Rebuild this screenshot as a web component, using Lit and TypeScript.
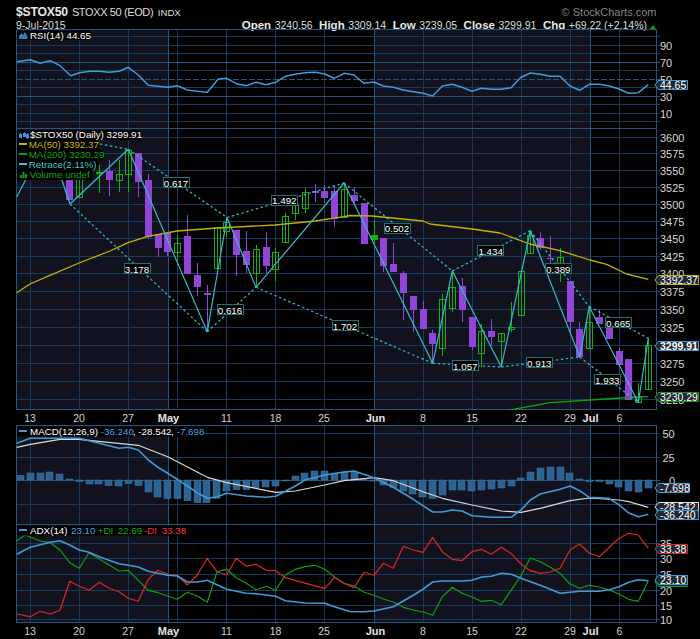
import { LitElement, html, svg, css } from "lit";
import { customElement } from "lit/decorators.js";

type P = [number, number];
const GRID = "#173a5c", BORDER = "#24557f", BAND = "#12121f";
const BLUE = "#3f9bd8", GREEN = "#0f9f0f", RED = "#e02525", YEL = "#c4b000", TEAL = "#33bcc4", PURP = "#9145d8";

const V: [number, boolean][] = [[30.5, false], [79.5, false], [128.5, false], [168.5, true], [177.5, false], [226.5, false], [275.5, false], [324.5, false], [374.5, true], [423.5, false], [472.5, false], [521.5, false], [570.5, false], [590.5, true], [619.5, false]];
const TICKS: [string, number, boolean][] = [["13", 30, false], ["20", 79, false], ["27", 128, false], ["May", 168.5, true], ["11", 226.5, false], ["18", 275.5, false], ["25", 324, false], ["Jun", 375.5, true], ["8", 423, false], ["15", 472, false], ["22", 521, false], ["29", 570, false], ["Jul", 590.5, true], ["6", 619.5, false]];

const RSI: P[] = [[16.7, 61.7], [30.3, 59.7], [40, 63.3], [50, 60.7], [60, 65.7], [70.7, 75.7], [79.3, 72.7], [90, 71.3], [99.3, 71.3], [109, 72.3], [119, 71.3], [128.3, 67.3], [138.3, 75], [148.3, 85.3], [158, 86.3], [167.7, 87.3], [177.3, 85.7], [187.3, 90], [197.3, 91.3], [207.3, 92.3], [218.3, 79], [226.7, 78.3], [236.3, 83.7], [246.3, 85.7], [256, 82.3], [266, 84.7], [275.7, 82.3], [285.3, 76.3], [295.3, 74.3], [305, 72.7], [315, 72.3], [324.7, 74], [334.3, 78.3], [344, 73.3], [354, 75], [364, 83.3], [374, 82], [383.3, 86], [393.3, 87.3], [403.3, 90], [413.3, 91.7], [423, 93.3], [432.7, 96], [442.3, 86], [452.3, 84.3], [462, 87.3], [472, 91.3], [481.3, 88.3], [491.3, 89.3], [501.3, 89.3], [511, 87.7], [521, 77.3], [530.3, 73], [540.3, 74.3], [550.3, 76.3], [560, 76.3], [570, 86], [579.7, 90.3], [589.3, 84.3], [599.3, 84.3], [609.3, 86], [619, 89], [628.7, 93.3], [638.3, 92.7], [648.3, 84.7]];

// x, wickTop, bodyTop, bodyBottom, wickBottom, kind (p purple, g hollow green, f filled green)
const CANDLES: [number, number, number, number, number, string][] = [
  [69.7, 165, 170, 200, 200, "p"], [79.3, 165, 170, 196.7, 197, "g"], [99.3, 165, 171.5, 173.5, 193, "f"], [109, 160, 171, 180, 195.7, "p"], [119, 160, 174, 179.5, 191.7, "g"], [128.4, 150, 150, 174.3, 191.7, "g"], [138.4, 153, 153, 181.7, 196.7, "p"], [148.4, 174, 180, 236.7, 239, "p"], [158, 234, 234, 247.7, 256.7, "p"], [167.7, 233, 233, 251.7, 256, "p"], [177.3, 235, 243, 251.7, 260, "g"], [187.3, 215, 236, 274, 274, "p"], [197.3, 262.7, 275, 286.7, 295.7, "p"], [207.3, 285, 293, 295, 331.7, "p"], [217, 227.3, 227.3, 268.7, 268.7, "g"], [226.7, 216.7, 221.7, 230.7, 236.7, "g"], [236.3, 230, 230, 255, 275.7, "p"], [246.3, 231, 251, 265, 272.7, "p"], [256, 245, 249.3, 273.3, 287, "g"], [266, 232, 247, 265.7, 273, "p"], [275.7, 248, 252, 268.7, 280.7, "g"], [285.3, 213, 216, 241.7, 241.7, "g"], [295.3, 199, 205, 213.3, 220, "g"], [305, 188, 191.7, 207.3, 213, "g"], [315, 184, 191, 192.7, 201.7, "p"], [324.7, 185, 191, 198.3, 203, "p"], [334.3, 186, 191, 219.3, 226.7, "p"], [344, 183, 189, 216.7, 216.7, "g"], [354, 187, 195, 201, 205, "p"], [364, 202.7, 202.7, 244, 244, "p"], [374, 220, 235, 240, 243, "f"], [383.3, 238.3, 238.3, 266, 272.3, "p"], [393.3, 243.3, 264, 272, 272, "p"], [403.3, 271, 273.3, 292.7, 320, "p"], [413.3, 296, 296, 310, 331.7, "p"], [423, 301, 309, 329.3, 329.3, "p"], [432.7, 330, 333.3, 344, 363.3, "p"], [442.3, 294, 299.3, 348.3, 355.7, "g"], [452.3, 271.7, 286.7, 307.7, 311.7, "g"], [462, 278, 286, 310, 321.7, "p"], [472, 317.3, 317.3, 346.7, 350, "p"], [481.3, 324, 330.7, 352.7, 366.7, "g"], [491.3, 319, 331, 336.7, 345, "p"], [501.3, 333.3, 333.3, 341.7, 367, "g"], [511, 302.3, 327.3, 329.3, 331.5, "g"], [521, 271.3, 271.3, 315.3, 315.3, "g"], [530.3, 230.7, 235, 253.3, 253.3, "g"], [540.3, 231.7, 238.3, 248.3, 250, "p"], [550.3, 236, 257.7, 259, 263, "p"], [560, 248.3, 257.3, 263.3, 281.7, "g"], [570, 281, 281, 321.7, 331.7, "p"], [579.7, 321.7, 329, 356.7, 357, "p"], [589.3, 306.7, 322.3, 348.3, 348.3, "g"], [599.3, 310, 317.3, 324, 324, "p"], [609.3, 318, 325, 338.7, 338.7, "p"], [619, 347.7, 351, 365, 365, "p"], [628.7, 359, 359, 400, 400, "p"], [638.3, 383.3, 396.7, 401.7, 402, "g"], [648.3, 338.3, 345, 389, 389, "g"],
];

const MA50: P[] = [[16.7, 292.7], [30, 284], [50, 275.3], [79, 263], [110, 251], [128, 242.7], [148, 236.3], [177, 231], [217, 228], [275, 225], [315, 221], [344, 216.7], [350, 215.5], [372, 216], [423, 221], [430, 224], [472, 229], [500, 233], [530, 244], [560, 250.7], [590, 260], [606.7, 264.3], [626.7, 274], [648.3, 279.3]];
const MA200: P[] = [[510, 410], [550, 402.7], [590, 400], [636.7, 397], [648.3, 396.7]];
const ZIG: P[] = [[16.7, 197], [36, 160], [50, 145], [70, 204], [128.3, 149.3], [207.3, 331.7], [227, 217.5], [256, 287.3], [344, 183], [432.7, 363.3], [452.3, 271], [501.3, 367], [530.3, 230.7], [579.7, 357], [589.3, 306.7], [638.3, 402.5], [648.3, 338.3]];
const DASH: [P, P][] = [[[100, 144], [128.3, 149.3]], [[70, 204], [207.3, 331.7]], [[128.3, 149.3], [227, 217.5]], [[207.3, 331.7], [256, 287.3]], [[227, 217.5], [344, 183]], [[256, 287.3], [432.7, 363.3]], [[344, 183], [452.3, 271]], [[432.7, 363.3], [501.3, 367]], [[452.3, 271], [530.3, 230.7]], [[501.3, 367], [579.7, 357]], [[530.3, 230.7], [589.3, 306.7]], [[579.7, 357], [638.3, 402.5]], [[589.3, 306.7], [648.3, 338.3]]];
const RATIOS: [string, number, number][] = [["3.178", 137, 268.5], ["0.617", 176, 182.5], ["0.616", 230, 309.5], ["1.492", 284.3, 200], ["1.702", 345, 325.5], ["0.502", 397, 228], ["1.057", 465.3, 365.5], ["1.434", 490.7, 250.5], ["0.913", 539.3, 362.5], ["0.389", 558.3, 268.5], ["1.933", 607.3, 379.5], ["0.665", 618.3, 322.5]];

const MACD: P[] = [[16.7, 443.3], [30.3, 438.3], [79, 438.3], [119, 448.3], [128.3, 447.3], [138.3, 450], [148.3, 460], [158, 467.3], [167.7, 473.3], [177.3, 479.3], [187.3, 486], [197.3, 492.7], [207.3, 498.3], [217, 496.7], [226.7, 493.3], [246.3, 496], [266, 497.3], [275.7, 496.3], [295.3, 486], [305, 480], [324.7, 475], [344, 472], [354, 471], [374, 477.7], [393.3, 487.3], [413.3, 499.3], [432.7, 512], [442.3, 512], [452.3, 510], [462, 511], [472, 515.7], [491.3, 517.3], [511, 517.3], [521, 510], [530.3, 500], [540.3, 494], [560, 489.3], [570, 486], [579.7, 490.7], [589.3, 497.3], [609, 498.3], [619.3, 505], [628.3, 512.7], [638.3, 516.7], [648.3, 514.3]];
const SIGNAL: P[] = [[16.7, 447.3], [30.3, 444.3], [60, 439.3], [79, 439.3], [128.3, 444.3], [138.3, 445.3], [167.7, 456.7], [207.3, 477.3], [226.7, 482.7], [275.7, 492.3], [295.3, 491], [324.7, 485], [344, 480.7], [374, 477.7], [393.3, 480.7], [423, 491.7], [442.3, 498.3], [472, 505], [501.3, 511], [521, 512.3], [540.3, 508.3], [570, 500.7], [589.3, 498], [619, 500], [628.7, 501.7], [648.3, 507.3]];
const HIST = [196, 189, 189, 186, 192, 207, 215, 222, 222, 227, 228, 221, 227, 246, 261, 266, 266, 272, 278, 278, 265, 243, 239, 239, 234, 231, 228, 212, 198, 189, 183, 183, 189, 186, 187, 205, 211, 225, 232, 243, 252, 261, 265, 255, 240, 240, 243, 240, 237, 234, 228, 204, 186, 174, 171, 171, 189, 207, 215, 215, 222, 231, 243, 246, 234].map((z) => 410 + z / 3);

const ADX: P[] = [[16.7, 554.3], [30.3, 547.3], [40.3, 544.7], [50.3, 542.3], [60, 540.7], [69.7, 545], [79.3, 550], [89, 552.3], [99.3, 556.7], [109, 560.3], [119, 563.7], [128.3, 565.3], [138.3, 567], [148.3, 571.3], [158, 573.3], [167.7, 575.3], [177.3, 576], [187.3, 582], [197.3, 582], [207.3, 580.3], [217, 584.7], [226.7, 589.3], [246.3, 593.3], [256, 593.7], [275.7, 596.3], [285.3, 600.7], [305, 603], [324.7, 603.3], [334.3, 606.7], [350, 611.5], [363, 611.7], [374, 611], [393.3, 606.7], [413.3, 595.3], [423.3, 589], [432.7, 582], [442.3, 581], [462, 581], [472, 580.3], [481.7, 577], [491.3, 576.3], [501.3, 573.3], [511.3, 574.3], [521, 578.3], [530.3, 581.7], [540.3, 585.3], [550.3, 589.3], [560, 593.3], [570, 592.3], [579.7, 591.3], [599.3, 591.3], [609.3, 589.7], [619, 586.7], [628.7, 582.3], [638.3, 579.7], [648.3, 580.7]];
const PDI: P[] = [[16.7, 540.7], [25, 535], [40.3, 541], [50.3, 542.7], [60, 550], [69.7, 562.7], [79.3, 568.3], [89, 552.7], [99.3, 559], [109, 565], [119, 571], [128.3, 570.3], [138.3, 580.3], [148.3, 590.3], [158, 592.7], [167.7, 596], [177.3, 599.3], [187.3, 592.3], [197.3, 596], [207.3, 602.3], [217, 571.7], [226.7, 569.3], [236.3, 577.7], [246.3, 583.3], [256, 589.7], [266, 586.3], [275.7, 590.3], [285.3, 575], [295.3, 569.3], [305, 566.7], [315, 565.3], [324.7, 569.3], [334.3, 576.7], [344, 583.3], [354, 586], [364, 592.3], [374, 595.3], [383.3, 599], [393.3, 602], [403.3, 607.3], [413.3, 610], [423, 612], [432.7, 615.3], [442.3, 596.7], [452.3, 587.3], [462, 593.3], [472, 597], [481.3, 601.3], [491.3, 600.3], [501.3, 604.7], [521, 575.7], [530.3, 558], [540.3, 561.7], [550.3, 567.3], [560, 573.3], [570, 584], [579.7, 588.3], [589.3, 585.3], [599.3, 587], [609.3, 590], [619, 594], [628.7, 599.3], [638.3, 601.3], [648.3, 580.7]];
const MDI: P[] = [[16.7, 614], [30.3, 616.7], [40.3, 611.3], [50.3, 614], [60, 610.3], [69.7, 581.3], [79.3, 586.3], [89, 590.3], [99.3, 582.3], [109, 588.3], [119, 591.7], [128.3, 598.3], [138.3, 601.3], [148.3, 579.3], [158, 570.3], [167.7, 574.3], [177.3, 575.3], [187.3, 585], [197.3, 575], [207.3, 558.3], [217, 571.7], [226.7, 574.7], [236.3, 558.3], [246.3, 566.3], [256, 564.3], [266, 570.3], [275.7, 570.7], [285.3, 577.7], [324.7, 588.7], [334.3, 577.3], [344, 583.3], [354, 587.7], [364, 572.3], [374, 575.3], [383.3, 563.3], [393.3, 568.3], [403.3, 546.3], [413.3, 550], [423, 552.3], [432.7, 537.3], [442.3, 551.7], [452.3, 559.3], [462, 560.7], [472, 551.7], [481.3, 549.3], [491.3, 554.3], [501.3, 547.3], [511, 553.3], [521, 564], [530.3, 570.7], [540.3, 573.3], [550.3, 572], [560, 568.3], [570, 550], [579.7, 544], [589.3, 553.3], [599.3, 556.7], [609.3, 547.3], [619, 538.3], [628.7, 533.3], [638.3, 535], [648.3, 548.3]];

const priceY = (p: number) => 137.3 + 2388 * (Math.log(3600) - Math.log(p));
const pts = (a: P[]) => a.map((p) => p.join(",")).join(" ");
const line = (a: P[], c: string, w = 1.5) => svg`<polyline points=${pts(a)} fill="none" stroke=${c} stroke-width=${w} stroke-linejoin="round"/>`;

function frame(y0: number, y1: number, hs: { y: number; major?: boolean; label?: string; lx?: number; dashed?: boolean }[]) {
  return svg`
    <rect x="16.5" y=${y0} width="152" height=${y1 - y0} fill=${BAND}/>
    <rect x="374.5" y=${y0} width="216" height=${y1 - y0} fill=${BAND}/>
    <g shape-rendering="crispEdges">
      ${V.map(([x, m]) => svg`<line x1=${x} x2=${x} y1=${y0} y2=${y1} stroke=${m ? BORDER : GRID}/>`)}
      ${hs.map((h) => svg`<line x1="16.5" x2="660" y1=${h.y} y2=${h.y} stroke=${h.major ? BORDER : GRID} stroke-dasharray=${h.dashed ? "6 2" : "none"}/>`)}
      <line x1="16.5" x2="16.5" y1=${y0} y2=${y1} stroke=${BORDER}/>
      <line x1="656.5" x2="656.5" y1=${y0} y2=${y1} stroke=${BORDER}/>
    </g>
    ${hs.filter((h) => h.label).map((h) => svg`<text class="ax" x=${h.lx ?? 660} y=${h.y + 4}>${h.label}</text>`)}`;
}

function tag(y0: number, y1: number, w: number, c: string, t: string, bold = false) {
  const r = 658.5 + w, m = (y0 + y1) / 2;
  return svg`<path d="M655,${m} L658.5,${y0} H${r} V${y1} H658.5 Z" fill="#222831" stroke=${c}/>
    ${t ? svg`<text class=${bold ? "tag b" : "tag"} x="660" y=${y1 - 1}>${t}</text>` : ""}`;
}

function legendBox(x1: number, y0: number, y1: number) {
  return svg`<rect x="17" y=${y0} width=${x1 - 17} height=${y1 - y0} fill="#000"/>`;
}

@customElement("app-root")
export class AppRoot extends LitElement {
  static styles = css`
    :host { display: block; width: 700px; height: 639px; background: #000; color: #ddd; font-family: "Liberation Sans", Arial, sans-serif; overflow: hidden; }
    .head { height: 29px; box-sizing: border-box; padding: 6px 44px 0 16px; display: flex; flex-direction: column; }
    .r1 { display: flex; align-items: baseline; height: 13px; line-height: 13px; }
    .sym { font-weight: 700; font-size: 12.2px; color: #e8e8e8; letter-spacing: -0.2px; }
    .nm { font-size: 11px; letter-spacing: -0.38px; margin-left: 4px; color: #ddd; }
    .ex { font-size: 9.7px; margin-left: 4.5px; color: #ddd; }
    .sc { margin-left: auto; margin-right: -0.5px; color: #858585; font-size: 11px; white-space: nowrap; }
    .r2 { display: flex; align-items: baseline; height: 10px; line-height: 10px; font-size: 10.5px; color: #ddd; margin-top: 1px; }
    .qs { margin-left: auto; display: flex; align-items: baseline; gap: 6.5px; white-space: nowrap; margin-right: 9px; }
    .qs b { font-size: 11.5px; margin-right: 3.5px; color: #e8e8e8; }
    .up { width: 0; height: 0; border: solid transparent; border-width: 0 3.5px 4px; border-bottom-color: #0a0; margin-left: -3.5px; margin-right: -9px; }
    svg { display: block; }
    svg text { font-family: "Liberation Sans", Arial, sans-serif; }
    .ax { fill: #d8d8d8; font-size: 11px; }
    .tk { fill: #d0d0d0; font-size: 10.5px; text-anchor: middle; }
    .tk.b { font-weight: 700; font-size: 11px; fill: #e4e4e4; }
    .lg { font-size: 9.8px; fill: #fff; }
    .tag { font-size: 10.5px; fill: #fff; }
    .tag.b { font-weight: 700; }
    .rt { font-size: 9.8px; fill: #fff; text-anchor: middle; }
  `;

  private ticks(y: number) {
    return TICKS.map(([t, x, b]) => svg`<text class=${b ? "tk b" : "tk"} x=${x} y=${y}>${t}</text>`);
  }

  private rsi() {
    const hs = [100, 90, 80, 70, 60, 50, 40, 30, 20, 10, 0].map((v) => ({
      y: Math.floor(79.3 + (50 - v) * 0.85) + 0.5,
      major: v === 70 || v === 30 || v === 50,
      dashed: v === 50,
      label: v % 20 === 10 && v !== 100 ? String(v) : undefined,
    }));
    return html`<svg width="700" height="99" viewBox="0 29 700 99">
      ${frame(29.5, 128, hs)}
      <line x1="16.5" x2="656.5" y1="29.5" y2="29.5" stroke=${BORDER} shape-rendering="crispEdges"/>
      ${line(RSI, BLUE)}
      ${legendBox(90, 30.5, 40)}
      <path d="M19,39 V36 L21.5,33 L23,35 L25,32 L27.5,36 V39 Z" fill="#2f7fb8"/>
      <text class="lg" x="30" y="38.7">RSI(14) 44.65</text>
      ${tag(80.5, 89.5, 29, BLUE, "44.65")}
    </svg>`;
  }

  private price() {
    const hs = [3600, 3575, 3550, 3525, 3500, 3475, 3450, 3425, 3400, 3375, 3350, 3325, 3300, 3275, 3250, 3225].map((p) => ({
      y: Math.floor(priceY(p)) + 0.5,
      label: p === 3300 ? undefined : String(p),
    }));
    const cw = 7;
    return html`<svg width="700" height="282" viewBox="0 128 700 282">
      ${frame(128, 410, hs)}
      <line x1="16.5" x2="656.5" y1="128.5" y2="128.5" stroke=${BORDER} shape-rendering="crispEdges"/>
      <line x1="16.5" x2="656.5" y1="409.5" y2="409.5" stroke=${BORDER} shape-rendering="crispEdges"/>
      <g shape-rendering="crispEdges">
        ${CANDLES.map(([x, wt, bt, bb, wb, k]) => {
          const cx = Math.floor(x) + 0.5;
          const c = k === "p" ? PURP : "#14ad14";
          return svg`
            <line x1=${cx} x2=${cx} y1=${wt} y2=${wb} stroke=${c}/>
            ${k === "g"
              ? svg`<rect x=${cx - 3} y=${Math.round(bt) + 0.5} width=${cw - 1} height=${Math.max(1, Math.round(bb - bt))} fill="none" stroke=${c}/>`
              : svg`<rect x=${cx - 3.5} y=${bt} width=${cw} height=${Math.max(1.5, bb - bt)} fill=${c}/>`}`;
        })}
      </g>
      ${line(MA50, YEL, 1.3)}
      ${line(MA200, GREEN, 1.3)}
      ${DASH.map(([a, b]) => svg`<line x1=${a[0]} y1=${a[1]} x2=${b[0]} y2=${b[1]} stroke=${TEAL} stroke-width="1.2" stroke-dasharray="2.5 2.5"/>`)}
      ${line(ZIG, TEAL, 1.2)}
      ${RATIOS.map(([t, x, y]) => svg`
        <rect x=${Math.floor(x - 13) + 0.5} y=${Math.floor(y - 5) + 0.5} width="26" height="10" fill="#000" stroke="#1f7078" shape-rendering="crispEdges"/>
        <text class="rt" x=${x} y=${y + 4}>${t}</text>`)}
      ${legendBox(140, 130, 140)}${legendBox(98, 140, 150)}${legendBox(103, 150, 160)}${legendBox(98, 160, 170)}${legendBox(92, 170, 180)}
      <g stroke="#3f8fd8" stroke-width="1" fill="none" shape-rendering="crispEdges">
        <path d="M20.5,133 V138 M24,132 V137 M27,133 V139"/>
        <rect x="19.5" y="134" width="2" height="3"/><rect x="23" y="133" width="2" height="3"/><rect x="26" y="134" width="2" height="3"/>
      </g>
      <text class="lg" x="30" y="138">$STOX50 (Daily) 3299.91</text>
      <rect x="19" y="143" width="8" height="2" fill=${YEL}/>
      <text class="lg" x="28.7" y="148" style="fill:#c8b400">MA(50) 3392.37</text>
      <rect x="19" y="153" width="8" height="2" fill=${GREEN}/>
      <text class="lg" x="28.7" y="158" style="fill:#10a510">MA(200) 3230.29</text>
      <rect x="19" y="163" width="8" height="2" fill="#3cc8d0"/>
      <text class="lg" x="28.7" y="168" style="fill:#3cc8d0">Retrace(2.11%)</text>
      <path d="M20,178 V175 H22 V178 M22.5,178 V172 H24.5 V178 M25,178 V174 H27 V178 Z" fill=${GREEN}/>
      <svg x="29.7" y="170" width="62" height="10" viewBox="29.7 170 62 10"><text class="lg" x="29.7" y="178" style="fill:#10a510">Volume undef</text></svg>
      ${tag(275.5, 284.5, 40, YEL, "3392.37")}
      ${tag(341.5, 350.5, 40, BLUE, "3299.91", true)}
      ${tag(392.5, 401.5, 40, GREEN, "3230.29")}
    </svg>`;
  }

  private macd() {
    const hs = [{ y: 433.5, label: "50", lx: 662.5 }, { y: 457.5, label: "25", lx: 662.5 }, { y: 480.5, major: true, label: "0", lx: 669 }, { y: 504.5 }];
    return html`<svg width="700" height="99" viewBox="0 425 700 99">
      ${frame(425, 524, hs)}
      <line x1="16.5" x2="656.5" y1="425.5" y2="425.5" stroke=${BORDER} shape-rendering="crispEdges"/>
      ${HIST.map((y, i) => {
        const x = Math.floor(20.5 + 9.81 * i) - 3;
        const top = Math.min(y, 480), h = Math.max(1, Math.abs(y - 480));
        return svg`<rect x=${x} y=${top} width="7" height=${h} fill="#2b6290" stroke="#3a78a6" stroke-width="0.5"/>`;
      })}
      ${line(SIGNAL, "#d8d8d8", 1.2)}
      ${line(MACD, BLUE, 1.6)}
      ${legendBox(204, 426.5, 436.5)}
      <rect x="19" y="430" width="8" height="2" fill=${BLUE}/>
      <text class="lg" x="30" y="435">MACD(12,26,9)</text>
      <text class="lg" x="100.7" y="435" style="fill:#4aa3e0">-36.240</text>
      <text class="lg" x="133" y="435">,</text>
      <text class="lg" x="138.3" y="435">-28.542</text>
      <text class="lg" x="171" y="435">,</text>
      <text class="lg" x="176.7" y="435" style="fill:#4aa3e0">-7.698</text>
      ${tag(483.5, 492.5, 31, BLUE, "-7.698")}
      ${tag(502.5, 511.5, 40, "#e0e0e0", "-28.542")}
      ${tag(510.5, 519.5, 40, BLUE, "-36.240")}
    </svg>`;
  }

  private adx() {
    const hs = [{ y: 543.5, label: "35" }, { y: 558.5, label: "30" }, { y: 574.5, label: "25" }, { y: 590.5, label: "20" }, { y: 605.5, label: "15" }, { y: 619.5, label: "10" }];
    return html`<svg width="700" height="100" viewBox="0 524 700 100">
      ${frame(524, 623, hs)}
      <line x1="16.5" x2="656.5" y1="524.5" y2="524.5" stroke=${BORDER} shape-rendering="crispEdges"/>
      <line x1="16.5" x2="656.5" y1="622.5" y2="622.5" stroke=${BORDER} shape-rendering="crispEdges"/>
      ${line(PDI, GREEN, 1.2)}
      ${line(MDI, RED, 1.2)}
      ${line(ADX, BLUE, 1.6)}
      ${legendBox(184.5, 525.5, 535.5)}
      <rect x="19" y="529" width="8" height="2" fill=${BLUE}/>
      <text class="lg" x="30" y="533.7">ADX(14)</text>
      <text class="lg" x="71" y="533.7" style="fill:#4aa3e0">23.10</text>
      <text class="lg" x="97.7" y="533.7" style="fill:#10b010">+DI</text>
      <text class="lg" x="117.7" y="533.7" style="fill:#10b010">22.69</text>
      <text class="lg" x="144" y="533.7" style="fill:#ff3030">-DI</text>
      <text class="lg" x="161.7" y="533.7" style="fill:#ff3030">33.38</text>
      ${tag(544.5, 553.5, 29, RED, "33.38")}
      ${tag(577.5, 586.5, 29, GREEN, "")}
      ${tag(575.5, 584.5, 29, BLUE, "23.10")}
    </svg>`;
  }

  render() {
    return html`
      <div class="head">
        <div class="r1">
          <span class="sym">$STOX50</span><span class="nm">STOXX 50 (EOD)</span><span class="ex">INDX</span>
          <span class="sc">© StockCharts.com</span>
        </div>
        <div class="r2">
          <span>9-Jul-2015</span>
          <span class="qs">
            <span><b>Open</b>3240.56</span><span><b>High</b>3309.14</span><span><b>Low</b>3239.05</span><span><b>Close</b>3299.91</span><span><b>Chg</b>+69.22 (+2.14%)</span>
            <span class="up"></span>
          </span>
        </div>
      </div>
      ${this.rsi()}
      ${this.price()}
      <svg width="700" height="15" viewBox="0 410 700 15">${this.ticks(421.5)}</svg>
      ${this.macd()}
      ${this.adx()}
      <svg width="700" height="15" viewBox="0 624 700 15">${this.ticks(634.5)}</svg>
    `;
  }
}
